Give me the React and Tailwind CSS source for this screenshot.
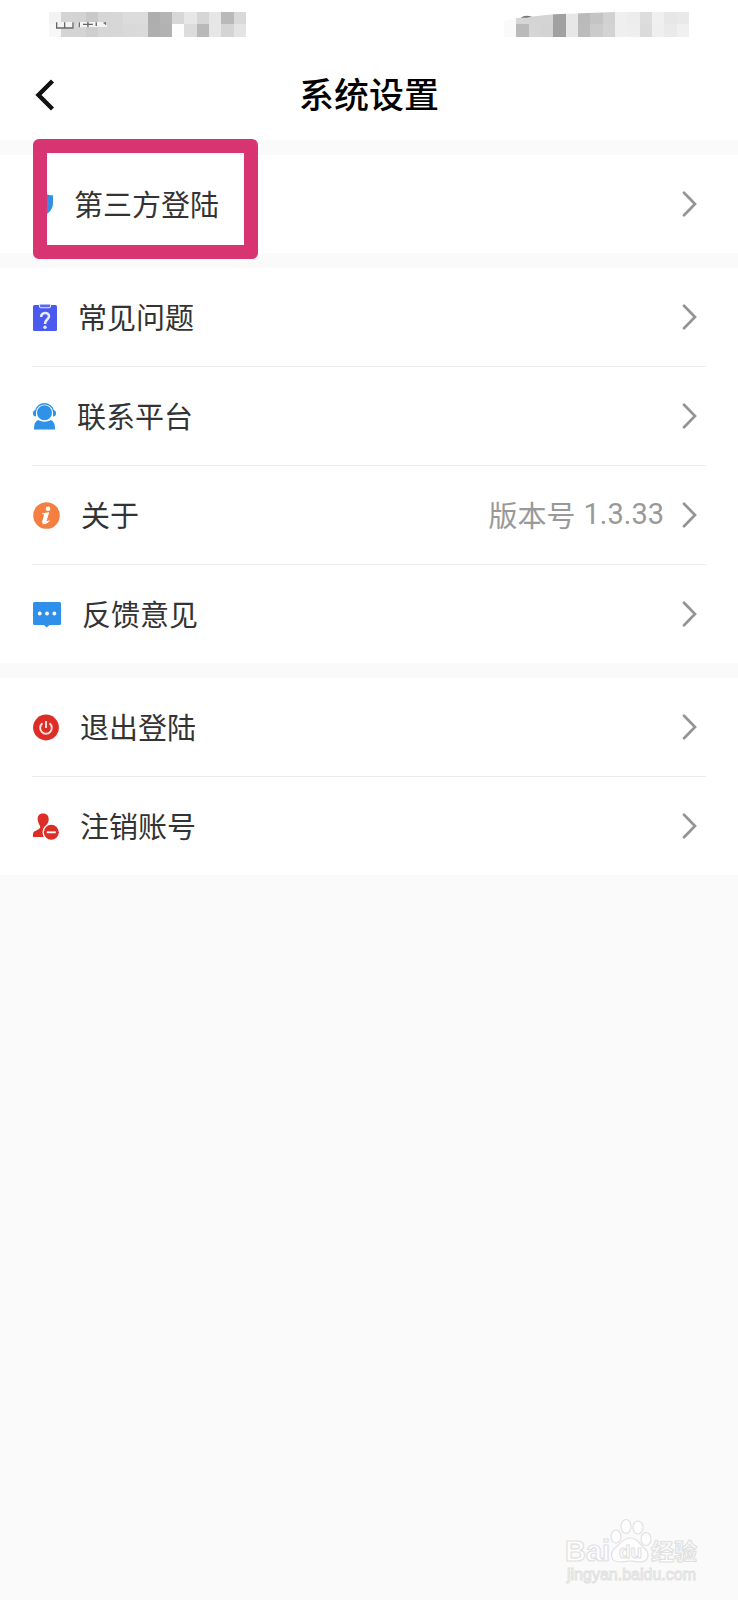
import React from 'react';

// Each column is [top, bottom] grey level of the mosaic
const LEFT_TILES = [
  ['#f3f3f3', '#f7f7f7'], ['#d4d4d4', '#d4d4d4'], ['#d3d3d3', '#d4d4d4'], ['#c9c9c9', '#cecece'],
  ['#d6d6d6', '#d6d6d6'], ['#d7d7d7', '#d7d7d7'], ['#dcdcdc', '#d9d9d9'], ['#dcdcdc', '#dadada'],
  ['#aeaeae', '#afafaf'], ['#b4b4b4', '#b2b2b2'], ['#d7d7d7', '#fdfdfd'], ['#e7e7e7', '#dcdcdc'],
  ['#d6d6d6', '#b9b9b9'], ['#e6e6e6', '#e6e6e6'], ['#b9b9b9', '#d4d4d4'], ['#d9d9d9', '#e4e4e4'],
];

const RIGHT_TILES = [
  ['#fafafa', '#fafafa'], ['#d6d6d6', '#bababa'], ['#d4d4d4', '#d5d5d5'], ['#d4d4d4', '#d3d3d3'],
  ['#a1a1a1', '#a1a1a1'], ['#e7e7e7', '#e7e7e7'], ['#bababa', '#bbbbbb'], ['#c4c4c4', '#cbcbcb'],
  ['#d1d1d1', '#d3d3d3'], ['#efefef', '#efefef'], ['#ededed', '#eeeeee'], ['#dddddd', '#dbdbdb'],
  ['#f0f0f0', '#efefef'], ['#e7e7e7', '#eaeaea'], ['#e9e9e9', '#f0f0f0'],
];

const Mosaic = ({ tiles, children }) => (
  <svg
    width={Math.round((tiles.length * 37) / 3)}
    height="25"
    viewBox={`0 0 ${tiles.length * 37} 75`}
    aria-hidden="true"
  >
    <g shapeRendering="crispEdges">
      {tiles.map(([top, bottom], i) => (
        <g key={i}>
          <rect x={i * 37} y="0" width="37" height="37" fill={top} />
          <rect x={i * 37} y="37" width="37" height="38" fill={bottom} />
        </g>
      ))}
    </g>
    {children}
  </svg>
);

const StatusBar = () => (
  <div className="flex h-[50px] items-start justify-between px-[49px] pt-3">
    <Mosaic tiles={LEFT_TILES}>
      <path d="M20 30H74V50H20zM86 30H174V45L86 46z" fill="#f4f4f4" />
      <path
        d="M23 31V48H72V31M47 31V48M91 31V46M102 37H132M117 30V46M142 31V42M164 33H170V38"
        fill="none"
        stroke="#666"
        strokeWidth="4"
      />
    </Mosaic>
    <Mosaic tiles={RIGHT_TILES}>
      <path d="M0 0H335L150 7L40 18L0 27z" fill="#fff" />
      <path d="M50 17Q60 8 84 13L70 17z" fill="#777" />
    </Mosaic>
  </div>
);

const BackIcon = () => (
  <svg width="20" height="32" viewBox="0 0 20 32" fill="none" aria-hidden="true">
    <path d="M17.5 2L3.5 16L17.5 30" stroke="#111" strokeWidth="4.4" />
  </svg>
);

const ChevronIcon = () => (
  <svg width="15" height="26" viewBox="0 0 15 26" fill="none" aria-hidden="true">
    <path d="M2 1.8L13 13L2 24.2" stroke="#949494" strokeWidth="2.7" strokeLinecap="round" />
  </svg>
);

const ShieldIcon = () => (
  <svg width="20" height="26" viewBox="0 0 20 26" aria-hidden="true">
    <path d="M10 1C13 3.500 16 4.300 20 4.300V12C20 18 16.500 22.500 10 25C3.500 22.500 0 18 0 12V4.300C4 4.300 7 3.500 10 1z" fill="#3490e3" />
  </svg>
);

const FaqIcon = () => (
  <svg width="24" height="27" viewBox="0 0 24 27" aria-hidden="true">
    <path d="M1.500 1H22.500Q24 1 24 2.500V25.500Q24 27 22.500 27H1.500Q0 27 0 25.500V2.500Q0 1 1.500 1z" fill="#4a59ee" />
    <path d="M6.500 0.500V2.500Q6.500 3.700 8 3.700H16Q17.500 3.700 17.500 2.500V0.500" fill="#5a68f0" stroke="#e3e5ff" strokeWidth="1.100" />
    <path d="M8.200 13C8.200 7.700 16 7.800 16 12.200C16 15.700 12 15.500 12 20" fill="none" stroke="#e8eaff" strokeWidth="2.600" />
    <circle cx="12" cy="23.200" r="1.700" fill="#e8eaff" />
  </svg>
);

const ContactIcon = () => (
  <svg width="23" height="27" viewBox="0 0 23 27" aria-hidden="true">
    <circle cx="11.500" cy="9.700" r="7.500" fill="#2e92e9" />
    <path d="M2.500 8.500C4 -1.800 19 -1.800 20.500 8.500" fill="none" stroke="#2e92e9" strokeWidth="1.400" />
    <path d="M3 7V13.500Q0 13.500 0 10.300Q0 7 3 7zM20 7V13.500Q23 13.500 23 10.300Q23 7 20 7z" fill="#2e92e9" />
    <path d="M5 17Q11.500 20.500 18 17Q22 19 22 25V26.500H1V25Q1 19 5 17z" fill="#2e92e9" />
  </svg>
);

const AboutIcon = () => (
  <svg width="27" height="27" viewBox="0 0 27 27" aria-hidden="true">
    <circle cx="13.500" cy="13.500" r="13.300" fill="#f57f40" />
    <circle cx="15" cy="6.800" r="2.300" fill="#fff" />
    <path d="M9.200 11.200L16.200 10.300L13.600 19Q13.500 20 16.300 18.300L16.800 19.300Q13.500 22.300 10.500 22.300Q8.500 21.800 9.200 19.300L11.200 12.500L9.200 12.200z" fill="#fff" />
  </svg>
);

const FeedbackIcon = () => (
  <svg width="28" height="27" viewBox="0 0 28 27" aria-hidden="true">
    <path d="M1.500 1H26.500Q28 1 28 2.500V22.500Q28 24 26.500 24H16.500L13.700 26.500L11 24H1.500Q0 24 0 22.500V2.500Q0 1 1.500 1z" fill="#2e90ea" />
    <circle cx="6.700" cy="12.500" r="1.900" fill="#fff" />
    <circle cx="14" cy="12.500" r="1.900" fill="#fff" />
    <circle cx="21.300" cy="12.500" r="1.900" fill="#fff" />
  </svg>
);

const LogoutIcon = () => (
  <svg width="26" height="27" viewBox="0 0 26 27" fill="none" aria-hidden="true">
    <circle cx="13" cy="13.500" r="12.900" fill="#dc2d26" />
    <path d="M9.500 9.300A5.800 5.800 0 1 0 16.500 9.300" stroke="#fbe3e1" strokeWidth="1.900" />
    <path d="M13 7V14" stroke="#fbe3e1" strokeWidth="1.900" />
  </svg>
);

const RemoveAccountIcon = () => (
  <svg width="26" height="27" viewBox="0 0 26 27" aria-hidden="true">
    <path d="M10 0.500C14 0.500 16 3 15.700 7C15.500 9.500 14 11 13.200 12.500C12.500 15 13.500 15.500 16 16L14 24H0V21C0 17.500 6.500 17 7.300 14.500C7.300 12.500 5 10.500 4.700 7C4.500 3 6 0.500 10 0.500z" fill="#dc2d26" />
    <circle cx="18.300" cy="19.300" r="8.800" fill="#fff" />
    <circle cx="18.300" cy="19.300" r="7.500" fill="#dc2d26" />
    <path d="M13.800 19.300H22.800" stroke="#fff" strokeWidth="1.900" />
  </svg>
);

const GROUPS = [
  [{ label: '第三方登陆', icon: ShieldIcon, highlighted: true }],
  [
    { label: '常见问题', icon: FaqIcon },
    { label: '联系平台', icon: ContactIcon },
    { label: '关于', icon: AboutIcon, value: '版本号', version: '1.3.33' },
    { label: '反馈意见', icon: FeedbackIcon },
  ],
  [
    { label: '退出登陆', icon: LogoutIcon },
    { label: '注销账号', icon: RemoveAccountIcon },
  ],
];

const SettingsRow = ({ label, icon: Icon, value, version, highlighted }) => (
  <button
    type="button"
    className="relative flex h-[98px] w-full items-center pr-[41px] pl-[33px] text-left text-[29px] leading-10 text-[#333]"
  >
    <Icon />
    <span className="ml-[21px] flex-1 pb-0.5">{label}</span>
    {value && (
      <span className="mr-[18px] flex gap-2 pb-0.5 text-[#999]">
        {value} <span className="font-[Roboto,'Noto_Sans_CJK_SC',sans-serif]">{version}</span>
      </span>
    )}
    <ChevronIcon />
    {highlighted && (
      <span className="pointer-events-none absolute -top-4 left-[33px] h-[120px] w-[225px] rounded-md border-14 border-[#d93472]" />
    )}
  </button>
);

const Watermark = () => (
  <svg
    className="mt-auto mr-10 mb-4 self-end"
    width="134"
    height="66"
    viewBox="0 0 134 66"
    fill="#fdfdfd"
    stroke="#e1e1e1"
    strokeWidth="1.200"
    role="img"
    aria-label="Baidu 经验 jingyan.baidu.com"
  >
    <g className="font-['Liberation_Sans',sans-serif] font-bold">
      <text x="1" y="43" fontSize="29">Bai</text>
      <path d="M66 20C72 20 75 24 79 29C86 34 86 44 76 44C70 44 70 43 66 43C62 43 61 44 56 44C46 44 45 35 52 29C57 25 60 20 66 20z" />
      <ellipse cx="52" cy="18.500" rx="5" ry="6.500" />
      <ellipse cx="62" cy="8.500" rx="5" ry="7" />
      <ellipse cx="74" cy="9.500" rx="5" ry="6.500" />
      <ellipse cx="82" cy="21" rx="5" ry="6.500" />
      <text x="55" y="40" fontSize="19" strokeWidth="1">du</text>
    </g>
    <text className="font-['Noto_Sans_CJK_SC',sans-serif] font-bold" x="87" y="42" fontSize="23">经验</text>
    <text className="font-['Liberation_Sans',sans-serif]" x="3" y="62" fontSize="16" strokeWidth="1">jingyan.baidu.com</text>
  </svg>
);

const App = () => {
  return (
    <div className="flex min-h-screen flex-col bg-[#fafafa] font-['Noto_Sans_CJK_SC',sans-serif]">
      <header className="bg-white">
        <StatusBar />
        <div className="flex h-[90px] items-center px-[35px]">
          <button type="button" aria-label="返回" className="flex w-10">
            <BackIcon />
          </button>
          <h1 className="flex-1 pb-1 text-center text-[35px] leading-12 font-medium text-black">系统设置</h1>
          <div className="w-10" />
        </div>
      </header>

      <main className="mt-[15px] flex flex-col gap-[15px]">
        {GROUPS.map((rows, i) => (
          <ul key={i} className="bg-white">
            {rows.map((row, j) => (
              <li key={row.label}>
                {j > 0 && <div className="mx-8 h-px bg-[#ededed]" />}
                <SettingsRow {...row} />
              </li>
            ))}
          </ul>
        ))}
      </main>

      <Watermark />
    </div>
  );
};

export default App;
